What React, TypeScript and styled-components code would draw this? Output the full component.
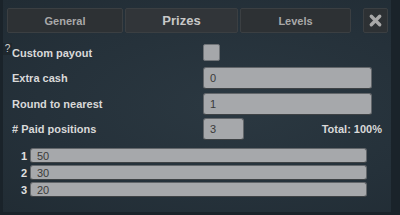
import React from "react";
import styled, { createGlobalStyle } from "styled-components";

const Global = createGlobalStyle`
  html, body { margin: 0; padding: 0; background: #1a232a; }
  body { font-family: "Liberation Sans", Arial, sans-serif; }
`;

const Frame = styled.div`
  width: 400px;
  height: 215px;
  box-sizing: border-box;
  padding: 0 9px 3px 3px;
  background: #1a232a;
`;

const Panel = styled.div`
  height: 100%;
  box-sizing: border-box;
  background: radial-gradient(ellipse at 60% 50%, #2b3841 0%, #25313a 60%, #212c34 100%);
  display: flex;
  flex-direction: column;
  padding: 8px 0 0 0;
`;

const TabBar = styled.div`
  display: flex;
  align-items: stretch;
  height: 25px;
  padding-left: 4px;
  gap: 2px;
`;

const Tab = styled.div<{ $w: number; $active?: boolean }>`
  width: ${(p) => p.$w}px;
  box-sizing: border-box;
  border: 1px solid #3b3f42;
  border-radius: 2px;
  background: ${(p) => (p.$active ? "#313539" : "#2d3134")};
  color: ${(p) => (p.$active ? "#c8c8c8" : "#a9a9a9")};
  font-weight: bold;
  font-size: ${(p) => (p.$active ? "13px" : "11px")};
  display: flex;
  align-items: center;
  justify-content: center;
`;

const CloseBtn = styled.div`
  width: 25px;
  margin-left: 10px;
  box-sizing: border-box;
  border: 1px solid #3b3f42;
  border-radius: 2px;
  background: #2d3134;
  display: flex;
  align-items: center;
  justify-content: center;
`;

const Form = styled.div`
  display: flex;
  flex-direction: column;
  margin-top: 11px;
`;

const Row = styled.div<{ $h: number; $mt: number }>`
  display: flex;
  align-items: center;
  height: ${(p) => p.$h}px;
  margin-top: ${(p) => p.$mt}px;
  position: relative;
`;

const Label = styled.div`
  width: 200px;
  padding-left: 9px;
  box-sizing: border-box;
  color: #d9d9d9;
  font-weight: bold;
  font-size: 11px;
  white-space: nowrap;
`;

const Help = styled.span`
  position: absolute;
  left: 0;
  top: -1px;
  width: 9px;
  height: 12px;
  background: #1f282e;
  color: #d0d0d0;
  font-size: 10px;
  line-height: 12px;
  text-align: center;
`;

const Check = styled.div`
  width: 17px;
  height: 17px;
  box-sizing: border-box;
  border: 1px solid #6f7377;
  border-radius: 2px;
  background: #a5a7aa;
`;

const Field = styled.div<{ $w: number; $h?: number }>`
  width: ${(p) => p.$w}px;
  height: ${(p) => p.$h ?? 22}px;
  box-sizing: border-box;
  border: 1px solid #62666a;
  border-bottom-color: #3e4245;
  border-radius: 3px;
  background: #a6a8ab;
  color: #3a3a3a;
  font-size: 11px;
  padding-left: 6px;
  display: flex;
  align-items: center;
`;

const Total = styled.div`
  margin-left: auto;
  margin-right: 9px;
  color: #d9d9d9;
  font-weight: bold;
  font-size: 11px;
`;

const Payouts = styled.div`
  display: flex;
  flex-direction: column;
  gap: 2px;
  margin-top: 8px;
`;

const PayRow = styled.div`
  display: flex;
  align-items: center;
  height: 15px;
`;

const Num = styled.div`
  width: 27px;
  text-align: right;
  padding-right: 3px;
  box-sizing: border-box;
  color: #e0e0e0;
  font-weight: bold;
  font-size: 11px;
`;

const payouts = [50, 30, 20];

export default function App() {
  return (
    <Frame>
      <Global />
      <Panel>
        <TabBar>
          <Tab $w={116}>General</Tab>
          <Tab $w={113} $active>Prizes</Tab>
          <Tab $w={111}>Levels</Tab>
          <CloseBtn>
            <svg width="15" height="15" viewBox="0 0 16 16">
              <path d="M3.5 3.5 L12.5 12.5 M12.5 3.5 L3.5 12.5" stroke="#a8a8a8" strokeWidth="3.6" strokeLinecap="round" />
            </svg>
          </CloseBtn>
        </TabBar>
        <Form>
          <Row $h={17} $mt={0}>
            <Help>?</Help>
            <Label>Custom payout</Label>
            <Check />
          </Row>
          <Row $h={22} $mt={6}>
            <Label>Extra cash</Label>
            <Field $w={169}>0</Field>
          </Row>
          <Row $h={22} $mt={4}>
            <Label>Round to nearest</Label>
            <Field $w={169}>1</Field>
          </Row>
          <Row $h={22} $mt={3}>
            <Label># Paid positions</Label>
            <Field $w={41}>3</Field>
            <Total>Total: 100%</Total>
          </Row>
        </Form>
        <Payouts>
          {payouts.map((v, i) => (
            <PayRow key={i}>
              <Num>{i + 1}</Num>
              <Field $w={337} $h={15}>{v}</Field>
            </PayRow>
          ))}
        </Payouts>
      </Panel>
    </Frame>
  );
}
